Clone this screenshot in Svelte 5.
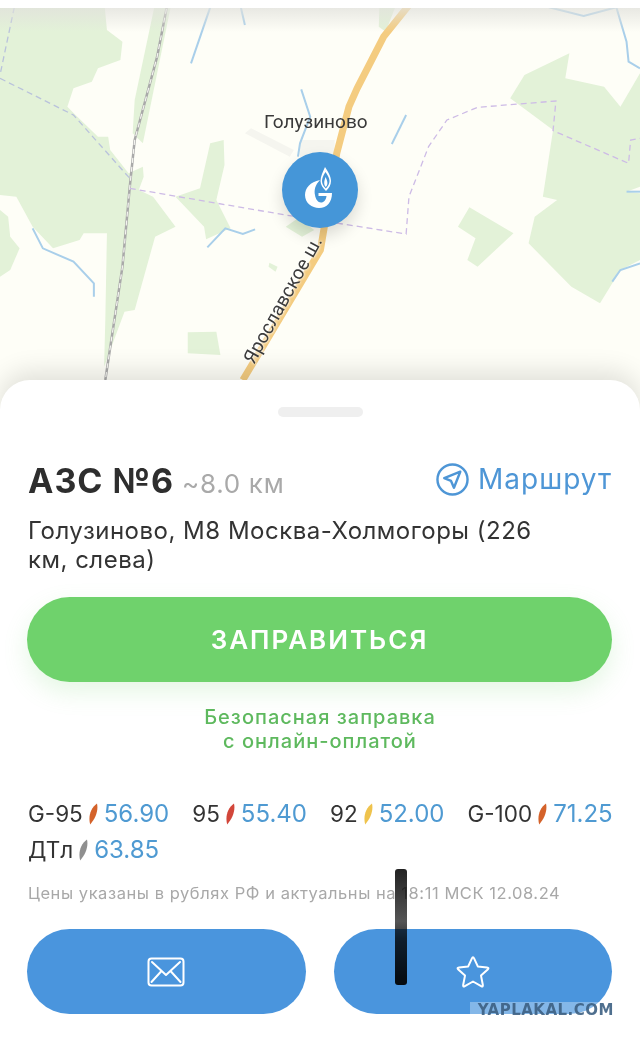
<script>
  const prices = [
    { name: 'G-95', value: '56.90', tone: 'orange' },
    { name: '95', value: '55.40', tone: 'red' },
    { name: '92', value: '52.00', tone: 'yellow' },
    { name: 'G-100', value: '71.25', tone: 'orange' },
    { name: 'ДТл', value: '63.85', tone: 'gray' }
  ];
</script>

<div class="screen">
  <div class="map">
    <svg class="canvas" viewBox="0 0 1568 1170" preserveAspectRatio="none">
      <g class="forest">
        <polygon points="0,0 255,0 262,90 300,125 295,180 240,205 225,245 180,265 165,320 185,345 240,410 265,410 270,450 315,520 350,500 352,530 340,570 375,590 430,680 380,710 330,930 305,935 255,1100 258,960 262,700 205,700 195,720 130,745 80,680 40,590 0,585" />
        <polygon points="350,430 420,10 380,10 330,300 325,400" />
        <polygon points="930,0 975,0 945,95 928,80" />
        <polygon points="515,430 548,420 550,495 530,600 565,685 505,718 500,680 430,590 490,565" />
        <polygon points="1395,160 1385,235 1480,260 1520,320 1568,220 1568,560 1535,575 1568,580 1568,780 1520,810 1470,910 1400,860 1295,730 1310,650 1365,600 1330,590 1355,390 1250,295 1285,225" />
        <polygon points="1150,622 1258,700 1170,800 1145,780 1165,715 1122,680" />
        <polygon points="460,997 530,995 540,1065 460,1060" />
        <polygon points="660,788 680,800 675,815 658,800" />
        <polygon points="0,630 20,650 25,710 48,745 25,810 0,830" />
        <polygon points="700,680 730,655 770,690 740,710" />
      </g>
      <g class="built">
        <polygon points="600,400 615,385 720,450 710,470" />
        <polygon points="735,420 820,420 820,470 735,470" />
      </g>
      <g class="water">
        <polyline points="515,22 468,190" />
        <polyline points="590,22 600,75" />
        <polyline points="1345,22 1430,48 1510,22 1535,125 1540,185 1568,205" />
        <polyline points="738,268 760,350 735,430 730,470" />
        <polyline points="995,345 960,432" />
        <polyline points="80,685 105,745 180,785 230,850 230,890" />
        <polyline points="508,742 552,685 595,702 625,688" />
        <polyline points="1500,845 1520,810 1568,790" />
        <polyline points="1535,575 1568,575" />
      </g>
      <polyline class="rail-base" points="412,0 385,170 330,420 318,560 300,800 258,1140" />
      <polyline class="rail-dash" points="412,0 385,170 330,420 318,560 300,800 258,1140" />
      <polyline class="road" points="1012,0 940,110 875,265 855,320 825,460 785,750 595,1140" />
      <g class="border">
        <polyline points="35,22 0,225" />
        <polyline points="0,235 180,345 318,535" />
      </g>
      <g class="border violet">
        <polyline points="318,565 700,645 995,702 1002,590 1050,440 1095,360 1170,322 1362,303 1355,392 1540,490 1545,420 1568,415" />
      </g>
    </svg>

    <span class="village">Голузиново</span>
    <span class="street">Ярославское ш.</span>

    <div class="marker">
      <svg viewBox="0 0 76 76" width="76" height="76">
        <path class="logo-fill" d="M38 28C28 30 23 36 23 43C23 51 30 56 37 56C45 56 50 50 50 41L36.500 41L36.500 44L44.500 44C44 48 42 50.500 39 50.500C36 50.500 33.500 47 33 43C32 38 33 33 38 28Z" />
        <path class="logo-fill" d="M43 15C46 20 49 24 49 29C49 33 47 36 44 39C41 36 38.500 33 38.500 29C38.500 24 41 20 43 15ZM43.500 20C41.500 23 40 26 40 29C40 32 41.500 34 43.800 36.500C46 34 47.500 32 47.500 29C47.500 26 45.500 23 43.500 20Z" />
        <path class="logo-fill" d="M43.500 25C44.500 27 45.400 29 45.400 31C45.400 33 44.500 34 43.800 35C43 34 42.200 33 42.200 31C42.200 29 43 27 43.500 25Z" />
      </svg>
    </div>
    <div class="veil"></div>
  </div>

  <section class="sheet">
    <div class="handle"></div>

    <header class="title-row">
      <h1>АЗС №6</h1>
      <span class="distance">~8.0 км</span>
      <a class="route" href="#route">
        <svg viewBox="0 0 34 34" width="33" height="33">
          <circle cx="17" cy="17" r="15.500" />
          <path d="M25 9L8.500 15.500L15.500 18.500L18.500 25.500Z" />
        </svg>
        Маршрут
      </a>
    </header>

    <p class="address">Голузиново, М8 Москва-Холмогоры (226 км, слева)</p>

    <button class="refuel">ЗАПРАВИТЬСЯ</button>
    <p class="safe">Безопасная заправка<br />с онлайн-оплатой</p>

    <ul class="prices">
      {#each prices as price}
        <li>
          <span class="fuel">{price.name}</span>
          <svg class={price.tone} viewBox="0 0 9 22" width="9" height="22">
            <path d="M8 0.500C9.500 7 7 15 1.200 21.500C-1 14 1.500 5 8 0.500Z" />
          </svg>
          <span class="value">{price.value}</span>
        </li>
      {/each}
    </ul>

    <p class="note">Цены указаны в рублях РФ и актуальны на 18:11 МСК 12.08.24</p>

    <div class="actions">
      <button aria-label="Написать">
        <svg viewBox="0 0 38 30" width="38" height="30">
          <rect x="1.500" y="1.500" width="35" height="27" rx="3" />
          <path d="M5 5L19 18L33 5M4.500 25L14.500 14M33.500 25L23.500 14" />
        </svg>
      </button>
      <button aria-label="В избранное">
        <svg viewBox="0 0 38 36" width="38" height="36">
          <path d="M17.800 4.600Q19 2 20.200 4.600L23.800 12.400L33 13.400Q35.500 13.700 33.700 15.400L27 21.600L28.800 30.800Q29.300 33.300 27.100 32.100L19 27.500L10.900 32.100Q8.700 33.300 9.200 30.800L11 21.600L4.300 15.400Q2.500 13.700 5 13.400L14.200 12.400Z" />
        </svg>
      </button>
    </div>

    <div class="scribble"></div>
    <div class="watermark">YAPLAKAL.COM</div>
  </section>
</div>

<style>
  :global(body) {
    margin: 0;
    background: #fff;
  }

  .screen {
    width: 640px;
    height: 1041px;
    overflow: hidden;
    position: relative;
    font-family: Inter, "Noto Sans", sans-serif;
    background: #fff;
  }

  .map {
    position: relative;
    height: 410px;
    background: #fefef7;
  }

  .canvas {
    display: block;
    width: 640px;
    height: 390px;
  }

  .forest polygon {
    fill: #e3f2d8;
  }

  .built polygon {
    fill: #f5f5ef;
  }

  .water polyline {
    fill: none;
    stroke: #a9cfea;
    stroke-width: 2;
    vector-effect: non-scaling-stroke;
  }

  .rail-base,
  .rail-dash {
    fill: none;
    vector-effect: non-scaling-stroke;
  }

  .rail-base {
    stroke: #a9a9a9;
    stroke-width: 2.500;
  }

  .rail-dash {
    stroke: #f4f4f0;
    stroke-width: 1.200;
    stroke-dasharray: 5 4;
  }

  .road {
    fill: none;
    stroke: #f4cc80;
    stroke-width: 7;
    vector-effect: non-scaling-stroke;
  }

  .border polyline {
    fill: none;
    stroke: #b9c2dc;
    stroke-width: 1.300;
    stroke-dasharray: 6 4;
    vector-effect: non-scaling-stroke;
  }

  .border.violet polyline {
    stroke: #cdbbe6;
  }

  .village {
    position: absolute;
    left: 264px;
    top: 111px;
    font-family: Roboto, sans-serif;
    font-size: 19px;
    line-height: 22px;
    color: #3a3a3a;
  }

  .street {
    position: absolute;
    left: 283px;
    top: 300px;
    transform: translate(-50%, -50%) rotate(-61deg);
    font-family: Roboto, sans-serif;
    font-size: 19px;
    line-height: 20px;
    white-space: nowrap;
    color: #3c3c3c;
    text-shadow: 0 0 3px #fff, 0 0 3px #fff;
  }

  .marker {
    position: absolute;
    left: 282px;
    top: 152px;
    width: 76px;
    height: 76px;
    border-radius: 50%;
    background: #4596d8;
    box-shadow: 0 8px 16px rgba(0, 0, 0, 0.14);
  }

  .marker svg {
    display: block;
  }

  .logo-fill {
    fill: #fff;
    fill-rule: evenodd;
  }

  .veil {
    position: absolute;
    inset: 0;
    background: linear-gradient(#fff 8px, rgba(225, 225, 220, 0.75) 8px, rgba(225, 225, 220, 0) 32px);
  }

  .sheet {
    position: relative;
    margin-top: -30px;
    height: 661px;
    box-sizing: border-box;
    padding: 27px 28px 0;
    background: #fff;
    border-radius: 30px 30px 0 0;
    box-shadow: 0 -8px 26px rgba(0, 0, 0, 0.12);
  }

  .handle {
    width: 85px;
    height: 10px;
    margin: 0 auto;
    border-radius: 5px;
    background: #efefef;
  }

  .title-row {
    display: flex;
    align-items: baseline;
    margin-top: 44px;
    height: 40px;
  }

  h1 {
    margin: 0;
    font-size: 34px;
    line-height: 40px;
    letter-spacing: 1px;
    font-weight: 700;
    color: #2e2e2e;
  }

  .distance {
    margin-left: 8px;
    font-size: 26px;
    letter-spacing: 0.7px;
    color: #a9a9a9;
  }

  .route {
    margin: -4px 0 0 auto;
    align-self: center;
    display: flex;
    align-items: center;
    gap: 9px;
    font-size: 28px;
    line-height: 40px;
    letter-spacing: 1px;
    text-decoration: none;
    color: #4e96d6;
  }

  .route svg {
    flex: none;
  }

  .route circle {
    fill: none;
    stroke: #4e96d6;
    stroke-width: 2.500;
  }

  .route path {
    fill: none;
    stroke: #4e96d6;
    stroke-width: 2.500;
    stroke-linejoin: round;
  }

  .address {
    margin: 15px 0 0;
    width: 525px;
    font-size: 24px;
    line-height: 29px;
    letter-spacing: 0.500px;
    color: #333;
  }

  .refuel {
    display: block;
    width: 585px;
    height: 85px;
    margin: 23px 0 0 -1px;
    border: 0;
    border-radius: 43px;
    background: #6fd26c;
    color: #fff;
    font: 600 26px Inter, sans-serif;
    letter-spacing: 2px;
    box-shadow: 0 10px 24px rgba(111, 210, 108, 0.18);
  }

  .safe {
    margin: 23px 0 0;
    text-align: center;
    font-size: 20px;
    line-height: 24px;
    letter-spacing: 1px;
    font-weight: 500;
    color: #5eb95e;
  }

  .prices {
    list-style: none;
    display: flex;
    flex-wrap: wrap;
    gap: 6px 23px;
    margin: 46px -6px 0 0;
    padding: 0;
    font-size: 24px;
    line-height: 30px;
  }

  .prices li {
    display: flex;
    align-items: center;
    gap: 6px;
  }

  .fuel {
    font-size: 22.500px;
    color: #333;
  }

  .value {
    color: #4f9ad2;
  }

  .orange path {
    fill: #d4622a;
  }

  .red path {
    fill: #d2463a;
  }

  .yellow path {
    fill: #efc34d;
  }

  .gray path {
    fill: #8f8f8f;
  }

  .note {
    margin: 17px 0 0;
    white-space: nowrap;
    font-size: 16.500px;
    line-height: 22px;
    letter-spacing: 0.550px;
    color: #a8a8a8;
  }

  .actions {
    display: flex;
    gap: 28px;
    margin: 25px 0 0 -1px;
  }

  .actions button {
    display: flex;
    align-items: center;
    justify-content: center;
    width: 279px;
    height: 85px;
    padding: 0;
    border: 0;
    border-radius: 43px;
    background: #4a95dd;
  }

  .actions svg {
    fill: none;
    stroke: #fff;
    stroke-width: 2;
    stroke-linejoin: round;
    stroke-linecap: round;
  }

  .scribble {
    position: absolute;
    left: 395px;
    top: 489px;
    width: 12px;
    height: 116px;
    border-radius: 3px;
    background: linear-gradient(#222, #555 45%, #333 60%, #111);
    mix-blend-mode: multiply;
  }

  .watermark {
    position: absolute;
    left: 470px;
    top: 622px;
    width: 144px;
    height: 16px;
    background: rgba(255, 255, 255, 0.32);
    font: 700 15px/17px "DejaVu Sans", sans-serif;
    letter-spacing: 0.500px;
    text-align: right;
    color: rgba(60, 95, 130, 0.9);
    white-space: nowrap;
    overflow: hidden;
  }
</style>
